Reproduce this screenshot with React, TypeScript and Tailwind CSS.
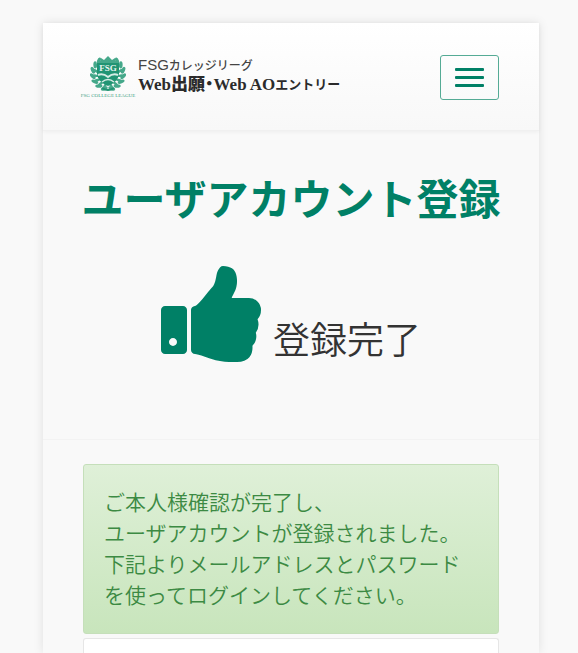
const leafAngles = [14, 36, 58, 80, 102, 124, 144];

function Crest() {
  return (
    <svg viewBox="0 0 36 37" className="h-[37px] w-9" fill="#45a88a" aria-hidden="true">
      {leafAngles.map((a) => (
        <g key={a}>
          <ellipse cx="18" cy="34" rx="1.8" ry="3.6" transform={`rotate(${a} 18 18.5) rotate(55 18 34)`} />
          <ellipse cx="18" cy="34" rx="1.8" ry="3.6" transform={`rotate(${-a} 18 18.5) rotate(-55 18 34)`} />
          <ellipse cx="18" cy="31" rx="1.3" ry="3" transform={`rotate(${a} 18 18.5) rotate(20 18 31)`} />
          <ellipse cx="18" cy="31" rx="1.3" ry="3" transform={`rotate(${-a} 18 18.5) rotate(-20 18 31)`} />
        </g>
      ))}
      <path d="M11 3 14 5 18 1 22 5 25 3 25 8 11 8Z" />
      <path d="M7 8H29V19Q28 27 18 31Q8 27 7 19Z" fill="#219473" />
      <path d="M8 20Q13 18 18 22Q23 18 28 20" fill="none" stroke="#d5ece4" strokeWidth="2" />
      <path d="M12 27Q18 22 24 27" fill="none" stroke="#d5ece4" strokeWidth="1.5" />
      <text x="18" y="16" textAnchor="middle" fontSize="9" fontWeight="700" fill="#e8f5f0" fontFamily="Liberation Serif, serif">
        FSG
      </text>
      <path d="M12 33Q18 37 24 33" fill="none" stroke="#219473" strokeWidth="2" />
    </svg>
  );
}

function Logo() {
  return (
    <a href="#" className="flex items-start text-[#2b2b2b]">
      <span className="flex w-[50px] flex-col items-center">
        <Crest />
        <span className="whitespace-nowrap font-['Liberation_Serif',serif] text-[5px] leading-[8px] text-[#3fa183]">
          FSG COLLEGE LEAGUE
        </span>
      </span>
      <span className="ml-[5px] flex flex-col whitespace-nowrap">
        <span className="flex h-5 items-center text-[12px] leading-5 font-medium text-[#444444]">
          <span className="font-['Liberation_Sans',sans-serif] text-[15px] font-normal">FSG</span>
          カレッジリーグ
        </span>
        <span className="flex h-5 items-center font-['Liberation_Serif','Noto_Sans_CJK_JP',serif] text-[17px] leading-5 font-bold">
          <span className="font-black">Web出願</span>
          <span className="[font-feature-settings:'halt']">・</span>
          <span>Web</span>
          <span className="ml-[3px]">AO</span>
          <span className="text-[13px]">エントリー</span>
        </span>
      </span>
    </a>
  );
}

function ThumbsUp() {
  return (
    <svg viewBox="64 128 1600 1536" className="h-24 w-[100px]" fill="#008066" aria-hidden="true">
      <path d="M320 1344q0-26-19-45t-45-19q-27 0-45.5 19t-18.5 45q0 27 18.5 45.5t45.5 18.5q26 0 45-18.5t19-45.5zm160-512v640q0 26-19 45t-45 19h-288q-26 0-45-19t-19-45v-640q0-26 19-45t45-19h288q26 0 45 19t19 45zm1184 0q0 86-55 149 15 44 15 76 3 76-43 137 17 56 0 117-15 57-54 94 9 112-49 181-64 76-197 78h-129q-66 0-144-15.5t-121.5-29-120.5-39.5q-123-43-158-44-26-1-45-19.5t-19-44.5v-641q0-25 18-43.5t43-20.5q24-2 76-59t101-121q68-87 101-120 18-18 31-48t17.5-48.5 13.5-60.5q7-39 12.5-61t19.5-52 34-50q19-19 45-19 46 0 82.5 10.5t60 26 40 40.5 24 45 12 50 5 45 .5 39q0 38-9.5 76t-19 60-27.5 56q-3 6-10 18t-11 22-8 24h277q78 0 135 57t57 135z" />
    </svg>
  );
}

export default function App() {
  return (
    <div lang="ja" className="flex min-h-screen flex-col bg-[#f9f9f9] pt-[23px] pr-[39px] pl-[43px] font-['Noto_Sans_CJK_JP',sans-serif]">
      <div className="flex flex-1 flex-col bg-[#f9f9f9] shadow-[0_0_10px_rgba(0,0,0,0.1)]">
        <header className="flex h-[108px] items-center justify-between border-b border-[#f0f0f0] bg-linear-to-b from-white to-[#f8f8f8] px-10 pt-0.5 shadow-[0_1px_4px_rgba(0,0,0,0.05)]">
          <Logo />
          <button
            type="button"
            aria-label="メニュー"
            className="flex h-[45px] w-[59px] flex-col items-center justify-center gap-[5px] rounded-[3px] border border-[#55ab95]"
          >
            <span className="h-[3px] w-[29px] rounded-[1px] bg-[#008066]" />
            <span className="h-[3px] w-[29px] rounded-[1px] bg-[#008066]" />
            <span className="h-[3px] w-[29px] rounded-[1px] bg-[#008066]" />
          </button>
        </header>
        <main className="flex flex-1 flex-col">
          <section className="border-b border-[#f3f3f3] pt-9 pb-[77px]">
            <h1 className="text-center text-[42px] leading-[60px] font-bold whitespace-nowrap text-[#008066]">
              ユーザアカウント登録
            </h1>
            <p className="mt-[39px] flex items-end justify-center gap-3 text-[37px] leading-[48px] font-[350] text-[#333333]">
              <ThumbsUp />
              <span>登録完了</span>
            </p>
          </section>
          <section className="flex flex-1 flex-col px-10 pt-6">
            <div
              role="status"
              className="rounded-[3px] border border-[#c5dfba] bg-linear-to-b from-[#dff0d8] to-[#c8e5bc] px-5 pt-[21px] pb-[23px] text-[21px] leading-[31px] font-[350] text-[#3c8a43]"
            >
              ご本人様確認が完了し、
              <br />
              ユーザアカウントが登録されました。
              <br />
              下記よりメールアドレスとパスワードを使ってログインしてください。
            </div>
            <div className="mt-1 flex-1 rounded-t-[3px] border border-b-0 border-[#e6e6e6] bg-white pt-3" />
          </section>
        </main>
      </div>
    </div>
  );
}
